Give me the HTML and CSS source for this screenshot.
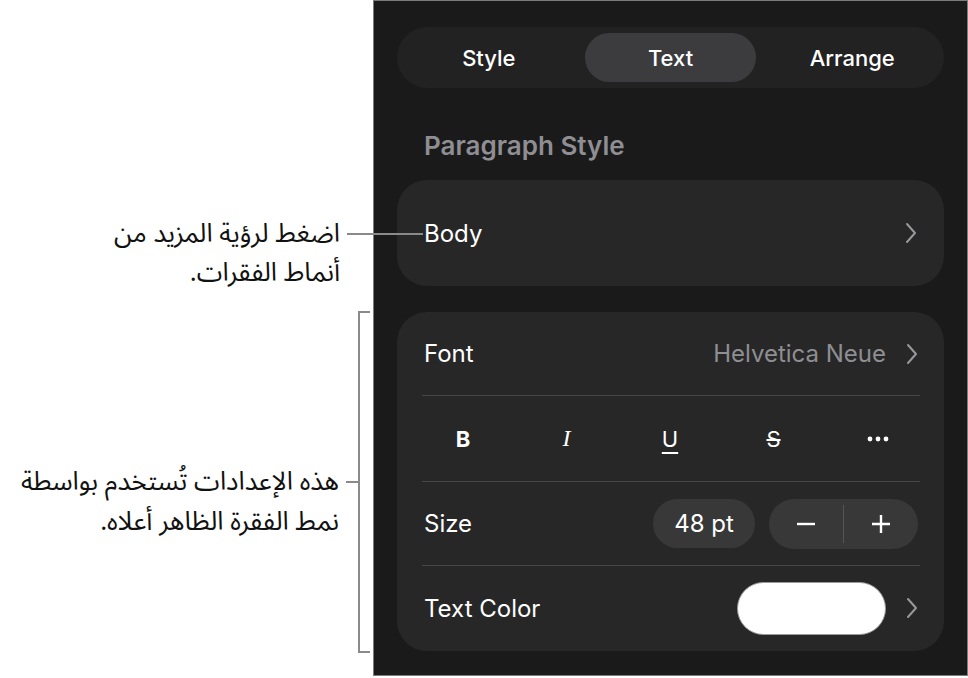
FILE: index.html
```html
<!DOCTYPE html>
<html lang="ar">
<head>
  <meta charset="UTF-8" />
  <meta name="viewport" content="width=device-width, initial-scale=1.0"/>
  <title>Text Format Panel</title>
  <link rel="stylesheet" href="styles.css">
</head>
<body>

  <!-- Callouts on the left -->
  <div class="notes">
    <div class="callout">
      <div class="note-text">
        <span class="note-line">اضغط لرؤية المزيد من</span>
        <span class="note-line">أنماط الفقرات.</span>
      </div>
      <span class="leader"></span>
    </div>

    <div class="bracket-group">
      <div class="bracket-label">
        <div class="note-text">
          <span class="note-line">هذه الإعدادات تُستخدم بواسطة</span>
          <span class="note-line">نمط الفقرة الظاهر أعلاه.</span>
        </div>
        <span class="tick"></span>
      </div>
      <div class="bracket"></div>
    </div>
  </div>

  <!-- Format panel -->
  <div class="panel" dir="ltr">
    <div class="segments">
      <div class="segment">Style</div>
      <div class="segment active">Text</div>
      <div class="segment">Arrange</div>
    </div>

    <h2 class="section-title">Paragraph Style</h2>

    <div class="card card-style">
      <span class="label">Body</span>
      <svg class="chevron" width="12" height="22" viewBox="0 0 12 22"><path d="M2 2 L10 11 L2 20" /></svg>
    </div>

    <div class="card card-settings">
      <div class="row row-font">
        <span class="label">Font</span>
        <span class="value">Helvetica Neue</span>
        <svg class="chevron" width="12" height="22" viewBox="0 0 12 22"><path d="M2 2 L10 11 L2 20" /></svg>
      </div>

      <div class="row row-styles">
        <span class="fmt fmt-b">B</span>
        <span class="fmt fmt-i">I</span>
        <span class="fmt fmt-u">U</span>
        <span class="fmt fmt-s">S</span>
        <span class="fmt fmt-more">
          <svg width="22" height="6" viewBox="0 0 22 6"><circle cx="3" cy="3" r="2.4"/><circle cx="11" cy="3" r="2.4"/><circle cx="19" cy="3" r="2.4"/></svg>
        </span>
      </div>

      <div class="row row-size">
        <span class="label">Size</span>
        <span class="size-pill">48 pt</span>
        <div class="stepper">
          <span class="step">
            <svg width="22" height="22" viewBox="0 0 22 22"><path d="M2 11 H20" /></svg>
          </span>
          <span class="step-divider"></span>
          <span class="step">
            <svg width="22" height="22" viewBox="0 0 22 22"><path d="M2 11 H20 M11 2 V20" /></svg>
          </span>
        </div>
      </div>

      <div class="row row-color">
        <span class="label">Text Color</span>
        <span class="swatch"></span>
        <svg class="chevron" width="12" height="22" viewBox="0 0 12 22"><path d="M2 2 L10 11 L2 20" /></svg>
      </div>
    </div>
  </div>

</body>
</html>
```

FILE: styles.css
```css
body {
  margin: 0;
  display: flex;
  height: 678px;
  background: #ffffff;
  overflow: hidden;
}

/* ---- left callouts ---- */

.notes {
  width: 373px;
  flex-shrink: 0;
  padding-top: 214px;
  box-sizing: border-box;
  font-family: "Noto Sans Arabic", "DejaVu Sans", sans-serif;
  color: #111;
}

.note-text {
  direction: rtl;
  text-align: right;
}

.note-line {
  display: block;
  height: 39px;
  font-size: 26px;
  line-height: 39px;
  white-space: nowrap;
}

.callout {
  display: flex;
  justify-content: flex-end;
  align-items: flex-start;
  position: relative;
  z-index: 2;
}

.leader {
  flex-shrink: 0;
  width: 76px;
  height: 2px;
  margin: 19px -50px 0 7px;
  background: #8a8a8a;
}

.bracket-group {
  display: flex;
  justify-content: flex-end;
  height: 342px;
  margin-top: 19px;
  margin-right: 3px;
}

.bracket-label {
  display: flex;
  align-items: flex-start;
  padding-top: 151px;
}

.bracket-label .note-line {
  height: 40px;
  line-height: 40px;
}

.tick {
  flex-shrink: 0;
  width: 12px;
  height: 2px;
  margin: 19px 0 0 7px;
  background: #8a8a8a;
}

.bracket {
  width: 10px;
  border: 2px solid #8a8a8a;
  border-right: none;
}

/* ---- format panel ---- */

.panel {
  flex: 1;
  height: 676px;
  box-sizing: border-box;
  padding: 26px 23px 0;
  background: #1a1a1a;
  border: 1px solid #7c7c7c;
  font-family: Inter, "Liberation Sans", sans-serif;
  color: #ffffff;
}

.segments {
  display: flex;
  gap: 10px;
  height: 61px;
  box-sizing: border-box;
  padding: 6px;
  border-radius: 31px;
  background: #222222;
}

.segment {
  flex: 1;
  display: flex;
  align-items: center;
  justify-content: center;
  border-radius: 25px;
  font-size: 22px;
  font-weight: 500;
}

.segment.active {
  background: #3c3c3e;
}

.section-title {
  margin: 44px 0 20px 27px;
  font-size: 26px;
  line-height: 28px;
  font-weight: 600;
  color: #8e8e93;
}

.card {
  background: #272727;
  border-radius: 30px;
}

.card-style {
  display: flex;
  align-items: center;
  height: 106px;
  padding: 0 27px;
  margin-bottom: 26px;
}

.label {
  font-size: 24px;
  flex: 1;
}

.chevron {
  flex-shrink: 0;
  fill: none;
  stroke: #98989d;
  stroke-width: 2;
  stroke-linecap: round;
  stroke-linejoin: round;
}

.card-settings {
  height: 339px;
}

.row {
  display: flex;
  align-items: center;
  margin: 0 24px 0 25px;
  padding: 0 2px;
}

.row + .row {
  border-top: 1px solid #474747;
}

.row-font {
  height: 83px;
}

.row-font .value {
  font-size: 24px;
  color: #8e8e93;
  margin-right: 20px;
}

.row-styles {
  height: 86px;
  justify-content: space-between;
  padding: 0 31px;
  box-sizing: border-box;
}

.fmt {
  width: 20px;
  text-align: center;
  font-size: 22px;
  color: #ffffff;
}

.fmt-b {
  font-weight: 700;
}

.fmt-i {
  font-family: "Liberation Serif", serif;
  font-style: italic;
  font-size: 24px;
}

.fmt-u {
  text-decoration: underline;
  text-underline-offset: 5px;
  text-decoration-thickness: 2px;
}

.fmt-s {
  text-decoration: line-through;
  text-decoration-thickness: 2px;
}

.fmt-more {
  width: 22px;
  display: flex;
  fill: #ffffff;
}

.row-size {
  height: 83px;
}

.size-pill {
  display: flex;
  align-items: center;
  justify-content: center;
  width: 102px;
  height: 49px;
  border-radius: 25px;
  background: #383838;
  font-size: 24px;
}

.stepper {
  display: flex;
  align-items: center;
  width: 149px;
  height: 50px;
  margin-left: 14px;
  border-radius: 25px;
  background: #383838;
}

.step {
  flex: 1;
  display: flex;
  justify-content: center;
}

.step svg {
  fill: none;
  stroke: #ffffff;
  stroke-width: 2.4;
}

.step-divider {
  width: 1px;
  height: 38px;
  background: #555555;
}

.row-color {
  height: 84px;
}

.swatch {
  width: 149px;
  height: 53px;
  margin-right: 20px;
  border-radius: 27px;
  background: #ffffff;
  border: 1px solid #9a9a9a;
  box-sizing: border-box;
}
```
